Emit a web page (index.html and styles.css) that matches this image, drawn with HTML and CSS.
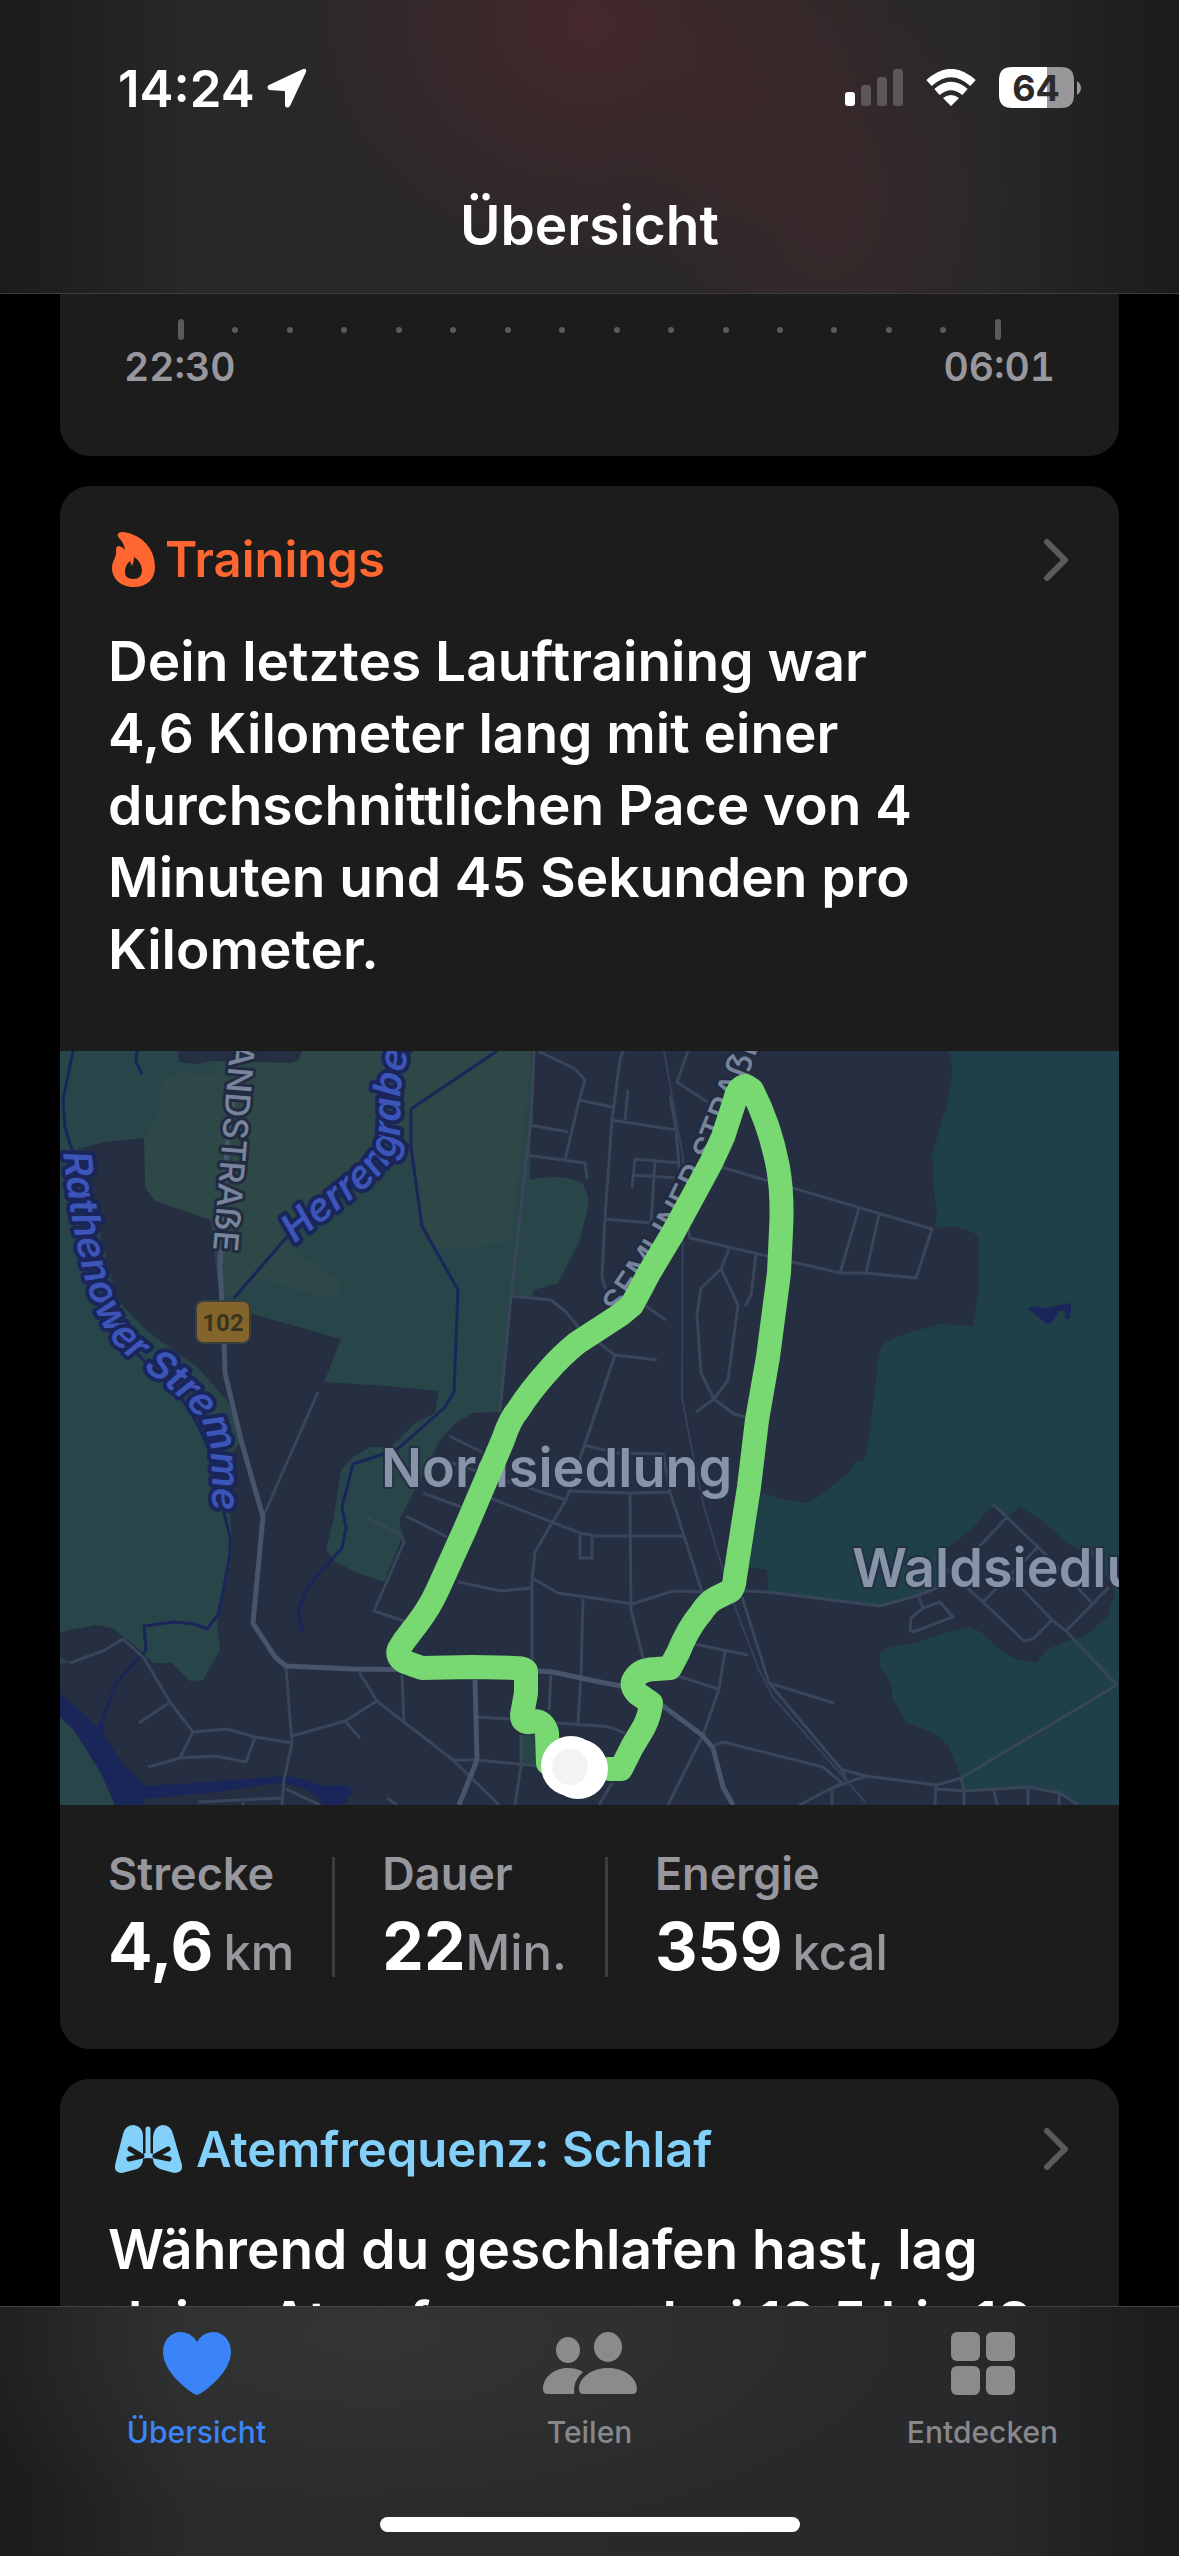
FILE: index.html
```html
<!DOCTYPE html>
<html lang="de">
<head>
    <meta charset="UTF-8">
    <meta name="viewport" content="width=device-width, initial-scale=1.0">
    <title>Übersicht</title>
    <link rel="stylesheet" href="styles.css">
</head>
<body>
    <header class="header">
        <div class="status">
            <div class="time">
                <span>14:24</span>
                <svg width="40" height="40" viewBox="0 0 40 40"><path fill="#fff" d="M36 1 2 17Q-1 19 2 22L17 23Q18 23 18 24L18 38Q20 41 23 38L39 4Q40 0 36 1Z"/></svg>
            </div>
            <div class="signals">
                <svg width="58" height="38" viewBox="0 0 58 38">
                    <rect x="0" y="23" width="10" height="14" rx="3" fill="#fff"/>
                    <rect x="16" y="16" width="10" height="21" rx="3" fill="#5b5759"/>
                    <rect x="32" y="8" width="10" height="29" rx="3" fill="#5b5759"/>
                    <rect x="48" y="0" width="10" height="37" rx="3" fill="#5b5759"/>
                </svg>
                <svg width="52" height="38" viewBox="0 0 52 38">
                    <path fill="none" stroke="#fff" stroke-width="8" d="M4 14Q26-6 48 14M12 23Q26 11 40 23"/>
                    <path fill="#fff" d="M18 29Q26 23 34 29L27 36Q26 38 25 36Z"/>
                </svg>
                <svg width="84" height="42" viewBox="0 0 84 42">
                    <path fill="#98979a" d="M48 0H62Q75 0 75 13V28Q75 41 62 41H48Z"/>
                    <path fill="#fff" d="M48 0H13Q0 0 0 13V28Q0 41 13 41H48Z"/>
                    <path fill="#98979a" d="M78 14Q82 17 82 21Q82 25 78 28Z"/>
                    <text class="battery" x="37" y="34" text-anchor="middle">64</text>
                </svg>
            </div>
        </div>
        <h1>Übersicht</h1>
    </header>

    <main class="content">
        <!-- Schlaf, unterer Teil -->
        <section class="card sleep">
            <div class="ticks">
                <b></b><i></i><i></i><i></i><i></i><i></i><i></i><i></i><i></i><i></i><i></i><i></i><i></i><i></i><i></i><b></b>
            </div>
            <div class="hours"><span>22:30</span><span>06:01</span></div>
        </section>

        <!-- Trainings -->
        <section class="card">
            <a href="#" class="card-title orange">
                <svg width="44" height="56" viewBox="0 0 44 56">
                    <path fill="#ff6630" fill-rule="evenodd" d="M10 0C26 1 43 14 43 35C43 48 34 55 22 55C9 55 0 47 0 36C0 28 5 26 4 18Q4 14 7 14Q11 15 13 18Q12 11 7 6Q3 1 10 0ZM22 25Q22 30 20 34Q19 32 18 29Q13 33 13 40Q13 47 21 47Q30 47 30 38Q29 29 22 25Z"/>
                </svg>
                <h2>Trainings</h2>
                <svg class="arrow" width="26" height="44" viewBox="0 0 26 44"><path d="M4 4 22 22 4 40"/></svg>
            </a>
            <p>Dein letztes Lauftraining war 4,6&nbsp;Kilometer lang mit einer durchschnittlichen Pace von 4 Minuten und 45 Sekunden pro Kilometer.</p>

            <svg class="map" viewBox="0 0 1059 754">
                <defs>
                    <path id="landstrasse" d="M172-28 151 225"/>
                    <path id="semliner" d="M560 266 603 204 632 154 658 101 675 58 688 24 708-30"/>
                    <path id="herrengraben" d="M235 193C275 158 318 135 334 104C346 82 336 50 344 20Q350-5 358-40"/>
                    <path id="stremme" d="M3 102C10 160 22 260 60 298C90 328 148 354 150 400Q154 435 151 490"/>
                </defs>
                <rect width="1059" height="754" fill="#262e42"/>

                <!-- Wald und Wiesen -->
                <path fill="#28464a" d="M0 0H472L470 129 458 189 451 246 440 361 413 362 396 372 380 389 355 439 339 469 343 484 324 531 298 522 275 511 266 499 274 466 281 419 293 406 310 396 331 396 355 372 375 362 379 340 327 335 264 331 281 288 189 262 160 250 151 169 95 149 85 136 84 87 45 91 18 98 57 249 86 279 138 317 169 352 181 389 168 410 172 502 157 572 160 599 143 629 130 630 112 612 93 612 83 602 64 586 52 577 36 574 0 581Z"/>
                <path fill="#2d4847" d="M119 22 103 29 98 62 85 86V136L95 150 151 169 166 245H175L189 229 207 230 262 246 277 244 282 232 238 202 226 187 344 92 351 99 362 176 374 197 406 198 451 189 472 0H241L236 11H157V24Z"/>
                <path fill="#262e42" d="M118 0 119 11 136 13 152 10 232 12 238 9 242 0Z"/>
                <path fill="#28464a" d="M467 112 470 129Q500 122 522 132Q530 145 528 156L520 189 498 232 474 239 472 245H452ZM0 666 14 679 41 722 55 754H0ZM0 606 10 612H0ZM462 684H477V714H462Z"/>
                <path fill="#1f4049" d="M887 0 891 4 892 21 888 49 872 104 874 142 877 161 875 177 892 175 913 181 919 187 918 239 913 275 880 273 851 281 827 290 821 296 818 309 809 389 804 409 794 412 790 421 754 449 744 452 723 448 701 442 689 516 707 519 708 540 820 555 859 544 885 534 875 512 885 499 914 476 925 462 933 456 947 466 961 456 985 472 1007 492 1040 512 1055 542 1047 566 1026 584 1004 591 987 599 976 612 957 608 944 602 921 581 909 576 888 581 854 592 827 597 820 602V616L832 634V647L847 672 875 683 888 694 901 726 904 739 968 736 999 742 1018 754H1059V0Z"/>

                <!-- Wasser -->
                <path fill="#1a2659" d="M0 642 17 657 36 675 43 672 45 686 65 716 86 735 148 731 224 725 245 728 262 735 286 734 293 740 284 754H263L258 746 241 736 220 732 155 741 84 748V754H55L41 722 14 679 0 666ZM968 258 973 255 985 257 1011 252V261L1009 268H1005V260L1000 259 992 272 987 273Z"/>
                <path class="water" d="M13 0 3 49 5 76 12 99M77 0 76 11 82 23M12 99Q25 250 60 285L97 323Q150 365 164 462L170 486V502L164 536 158 564 147 578 134 573 114 571 84 575 86 599 57 631 40 674M174 247 226 187 344 95H351M437 0 351 58V96L362 175 398 239 394 341 384 357 348 389 336 399 293 413 282 456 286 477 282 497 255 527 245 542 238 561 243 581"/>

                <!-- Straßen -->
                <path class="road" d="M474 0 471 70 466 110 451 246 440 361M478 0 515 18 525 29 519 50 505 109M470 74 508 81M466 104 525 112 527 128M519 49 552 56M452 245 491 249 506 261 519 277M258 341 203 466M563 0 560 9 552 69 545 166 542 226 547 242M568 39 565 69M552 69 616 79M610 44 616 79 620 127M620 112 575 108 572 137M573 124 618 127M595 111 591 172 545 168M628 0 617 31 649 52"/>
                <path class="road" d="M661 116 872 178 856 227 806 222H780L630 187 628 177M799 157 780 222M819 164 806 222M669 198 661 218 641 237 637 264 641 322 654 348 668 329 678 254 661 218M696 204 691 244 685 255M636 361 654 348 674 363 685 366M584 254 606 269M539 292 555 304 597 309M555 304 506 449 492 472 475 501 472 529V609"/>
                <path class="road" d="M389 385 422 401M389 411 506 449M523 394 558 402 603 403M363 442 401 456M430 447 520 482 535 485H623M346 465 387 486M307 467 341 484 344 491 314 560 344 570M398 531 441 540 472 537M472 527 498 542 540 548 572 553 613 540 644 541M520 484V507H532V484M570 442 571 559 583 607M508 440 570 442 610 441M603 402 610 441 642 541M523 548 521 626 518 672M491 624 489 659M496 672 540 675 549 676 565 682M418 666 451 668M461 684V715L455 754M393 709H417L477 715M342 624 344 671"/>
                <path class="road" d="M299 621 317 650 344 671 393 709 439 754M317 650 285 670 232 685M285 670 300 687M226 616 232 692 224 729 222 754M232 692 195 686 167 678 133 681 110 651 84 607 63 588 45 599 10 612M110 651 79 672M133 681 120 707 88 716M120 707 155 705 186 711 195 686M222 747 138 751M183 749V754M226 738 260 754M327 747 337 754"/>
                <path class="road" d="M684 540 708 541 820 555 859 544 885 534 882 514M915 500 947 466M933 453 978 496 1031 551M978 496 923 551M882 514 923 551 964 590 973 588 992 569M949 524 992 569 1006 580 1057 634 901 727 876 734 806 725 780 718M1049 536 1006 580M859 546 863 557M880 551 893 566 853 581 850 579 851 567 863 557ZM682 546 709 632 782 719 787 731M709 632 774 652M634 593 688 604M665 600 659 638 643 684 608 754M618 625 658 638M653 695 663 691 763 716 782 732 772 737 739 754M806 725 772 737V754M876 734 875 754M877 738 904 740 968 736 1000 742 1018 754M901 727 904 740V754M934 740 937 754M968 736V754M999 742V754M552 732 539 754"/>
                <path class="rail" d="M604 0 623 106 622 346 630 389 644 456 659 506 675 556 699 619 713 646 806 752"/>
                <path class="main-road" d="M179 0 167 96 160 216 164 289 165 322 181 389 203 466 193 572 215 606 226 615 293 618 479 620 492 621 540 631 561 635 603 655 642 684 653 697 663 736 673 754M415 629 417 709 399 754"/>

                <!-- Beschriftung -->
                <text class="street"><textPath href="#landstrasse">LANDSTRAẞE</textPath></text>
                <text class="street"><textPath href="#semliner">SEMLINER STRAẞE</textPath></text>
                <text class="river"><textPath href="#herrengraben">Herrengraben</textPath></text>
                <text class="river"><textPath href="#stremme">Rathenower Stremme</textPath></text>
                <text class="place" x="321" y="436">Nordsiedlung</text>
                <text class="place" x="792" y="536">Waldsiedlung</text>
                <rect x="136" y="250" width="54" height="42" rx="7" fill="#85642b" stroke="#39403f" stroke-width="2"/>
                <text class="shield" x="163" y="280" text-anchor="middle">102</text>

                <!-- Laufstrecke -->
                <path class="route" d="M488 712 487 682Q484 670 474 670Q462 674 462 664L466 642V620Q464 617 456 617L413 616 362 617 345 611Q336 606 339 598L344 590 357 573Q370 556 378 538L406 476 443 389Q450 368 458 359Q470 340 489 319Q500 306 517 292L560 264 572 254 589 222 613 182 651 112 663 86 675 49Q678 36 686 35L692 39Q710 74 718 116Q723 145 721 180L719 222 708 306 697 369 689 436 675 526Q674 540 668 541L656 547Q648 551 641 562Q628 577 618 602L610 617 596 618Q581 618 575 627Q569 634 578 643L591 652Q590 664 584 676L572 696 561 718H549"/>
                <circle cx="511" cy="715" r="30" fill="#fff"/>
                <circle cx="518" cy="718" r="30" fill="#fff"/>
                <circle cx="510" cy="716" r="18" fill="#f3f3f5"/>
            </svg>

            <dl class="stats">
                <div>
                    <dt>Strecke</dt>
                    <dd>4,6<small class="unit">km</small></dd>
                </div>
                <div>
                    <dt>Dauer</dt>
                    <dd>22<small>Min.</small></dd>
                </div>
                <div>
                    <dt>Energie</dt>
                    <dd>359<small class="unit">kcal</small></dd>
                </div>
            </dl>
        </section>

        <!-- Atemfrequenz -->
        <section class="card">
            <a href="#" class="card-title blue">
                <svg width="72" height="50" viewBox="0 0 72 50">
                    <path fill="#83d0fb" d="M22 1Q32 3 31 14V35Q31 42 25 45L10 49Q2 49 3 41L11 10Q13 1 22 1ZM50 1Q41 3 41 14V35Q41 42 48 45L62 49Q71 49 70 41L61 10Q59 1 50 1Z"/>
                    <path stroke="#83d0fb" stroke-width="5" stroke-linecap="round" fill="none" d="M36 5V30"/>
                    <path fill="#83d0fb" d="M34 26H38V29L44 31V35L36 34 29 35V31L34 29Z"/>
                    <path stroke="#1c1c1c" stroke-width="5" stroke-linecap="round" fill="none" d="M18 25 28 31M17 35 30 32M56 25 45 31M57 35 43 32"/>
                </svg>
                <h2>Atemfrequenz: Schlaf</h2>
                <svg class="arrow" width="26" height="44" viewBox="0 0 26 44"><path d="M4 4 22 22 4 40"/></svg>
            </a>
            <p>Während du geschlafen hast, lag deine Atemfrequenz bei 12,5 bis 18</p>
        </section>
    </main>

    <nav class="tabs">
        <div class="tab-row">
            <a href="#" class="active">
                <svg width="70" height="64" viewBox="0 0 70 64"><path d="M35 63C32 63 1 42 1 20C1 8 9 0 19 0Q29 0 35 10Q41 0 51 0C61 0 69 8 69 20C69 42 38 63 35 63Z"/></svg>
                <span>Übersicht</span>
            </a>
            <a href="#">
                <svg width="94" height="64" viewBox="0 0 94 64">
                    <ellipse cx="25" cy="18" rx="12" ry="13"/>
                    <ellipse cx="65" cy="15" rx="14" ry="15"/>
                    <path d="M5 62Q0 62 0 57C0 46 10 36 25 36Q34 36 40 40Q30 48 31 62ZM41 62Q36 62 36 57C36 46 48 36 65 36C82 36 94 46 94 57Q94 62 89 62Z"/>
                </svg>
                <span>Teilen</span>
            </a>
            <a href="#">
                <svg width="64" height="64" viewBox="0 0 64 64">
                    <rect width="29" height="29" rx="6"/>
                    <rect x="35" width="29" height="29" rx="6"/>
                    <rect y="34" width="29" height="29" rx="6"/>
                    <rect x="35" y="34" width="29" height="29" rx="6"/>
                </svg>
                <span>Entdecken</span>
            </a>
        </div>
        <div class="home"></div>
    </nav>
</body>
</html>
```
FILE: styles.css
```css
*{box-sizing: border-box;}
body{
    display: flex;
    flex-direction: column;
    height: 100vh;
    margin: 0;
    background: #000;
    color: #fff;
    font-family: Inter, "Liberation Sans", sans-serif;
    overflow: hidden;
}
h1, h2, p, dl, dd{margin: 0;}
a{color: inherit;text-decoration: none;}
svg{flex: none;}

/* Kopfzeile */
.header{
    flex: none;
    border-bottom: 1px solid #3e3c3d;
    background:
        radial-gradient(ellipse 26% 90% at 50% 8%, #6a283270, transparent),
        radial-gradient(ellipse 16% 90% at 70% 66%, #60283050, transparent),
        linear-gradient(90deg, #1b1b1b, #282828 16%, #282828 84%, #1b1b1b);
}
.status{
    display: flex;
    justify-content: space-between;
    align-items: center;
    padding: 58px 96px 0 118px;
    height: 118px;
}
.time, .signals{
    display: flex;
    align-items: center;
}
.time{
    gap: 12px;
    font-size: 51px;
    font-weight: 600;
}
.signals{gap: 22px;}
.battery{
    font-size: 36px;
    font-weight: 700;
    fill: #2b292a;
}
h1{
    padding: 71px 0 32px;
    font-size: 55px;
    line-height: 72px;
    font-weight: 600;
    text-align: center;
}

/* Karten */
.content{
    flex: 1;
    min-height: 0;
    overflow: hidden;
    display: flex;
    flex-direction: column;
    gap: 30px;
    padding: 0 60px;
}
.card{
    flex: none;
    border-radius: 30px;
    background: #1c1c1c;
    overflow: hidden;
}
.card p{
    padding: 0 48px;
    font-size: 55px;
    line-height: 72px;
    font-weight: 600;
}
.card-title{
    display: flex;
    align-items: center;
    height: 139px;
    padding: 8px 50px 0 52px;
}
.card-title h2{
    flex: 1;
    font-size: 49px;
    font-weight: 600;
}
.orange{gap: 9px;color: #ff6630;}
.blue{
    height: 134px;
    padding-top: 6px;
    gap: 12px;
    color: #83d0fb;
}
.arrow path{
    fill: none;
    stroke: #5b5b5f;
    stroke-width: 6;
    stroke-linecap: round;
    stroke-linejoin: round;
}

/* Zeitleiste */
.sleep{
    height: 162px;
    padding-top: 25px;
    border-radius: 0 0 30px 30px;
}
.ticks{
    display: flex;
    align-items: center;
    justify-content: space-between;
    padding: 0 118px;
}
.ticks b{
    width: 6px;
    height: 21px;
    border-radius: 3px;
    background: #5b5b5f;
}
.ticks i{
    width: 6px;
    height: 6px;
    border-radius: 50%;
    background: #5b5b5f;
}
.hours{
    display: flex;
    justify-content: space-between;
    padding: 3px 64px;
    font-size: 39px;
    line-height: 48px;
    font-weight: 600;
    font-variant-numeric: tabular-nums;
    color: #98979e;
}

/* Karte mit Laufstrecke */
.map{
    display: block;
    width: 100%;
    margin-top: 66px;
}
.water, .road, .rail, .main-road, .route{
    fill: none;
    stroke-linejoin: round;
}
.water{stroke: #1a2659;stroke-width: 3;}
.road{stroke: #394559;stroke-width: 3;}
.rail{stroke: #35415a;stroke-width: 2;}
.main-road{stroke: #46556b;stroke-width: 5;}
.route{
    stroke: #78d872;
    stroke-width: 24;
    stroke-linecap: round;
}
.map text{
    paint-order: stroke;
    stroke-linejoin: round;
}
.street{
    font-size: 34px;
    font-weight: 500;
    fill: #76859b;
    stroke: #222b40;
    stroke-width: 6;
}
.river{
    font-size: 39px;
    font-style: italic;
    font-weight: 600;
    fill: #3c55b8;
    stroke: #1a2659;
    stroke-width: 8;
}
.place{
    font-size: 54px;
    font-weight: 600;
    fill: #8793a6;
    stroke: #262e42;
    stroke-width: 4;
}
.shield{
    font-family: Roboto, sans-serif;
    font-size: 24px;
    font-weight: 700;
    fill: #37351f;
}

/* Werte */
.stats{
    display: flex;
    padding: 50px 48px 62px;
}
.stats div{
    display: flex;
    flex-direction: column;
    justify-content: center;
    height: 132px;
}
.stats div + div{
    padding-left: 50px;
    margin-left: 38px;
    background: linear-gradient(#3d3d40, #3d3d40) 0 20% / 3px 120px no-repeat;
}
dt{
    font-size: 45px;
    line-height: 56px;
    font-weight: 600;
    color: #98979e;
}
dd{
    font-size: 66px;
    line-height: 88px;
    font-weight: 700;
    white-space: nowrap;
}
dd small{
    font-size: 49px;
    font-weight: 500;
    color: #98979e;
}
.unit{margin-left: 10px;}

/* Tableiste */
.tabs{
    flex: none;
    padding-bottom: 24px;
    border-top: 1px solid #414142;
    background:
        radial-gradient(ellipse 45% 80% at 32% 10%, #3e3f3e80, transparent),
        linear-gradient(90deg, #1b1b1b, #292a2b 16%, #28292b 84%, #1b1b1b);
}
.tab-row{display: flex;}
.tab-row a{
    flex: 1;
    display: flex;
    flex-direction: column;
    align-items: center;
    gap: 18px;
    padding-top: 25px;
    font-size: 30px;
    line-height: 36px;
    font-weight: 500;
    color: #88888a;
    fill: #8b8b8b;
}
.tab-row .active{color: #3a84f7;fill: #3a84f7;}
.home{
    width: 420px;
    height: 15px;
    margin: 67px auto 0;
    border-radius: 8px;
    background: #fff;
}
```
